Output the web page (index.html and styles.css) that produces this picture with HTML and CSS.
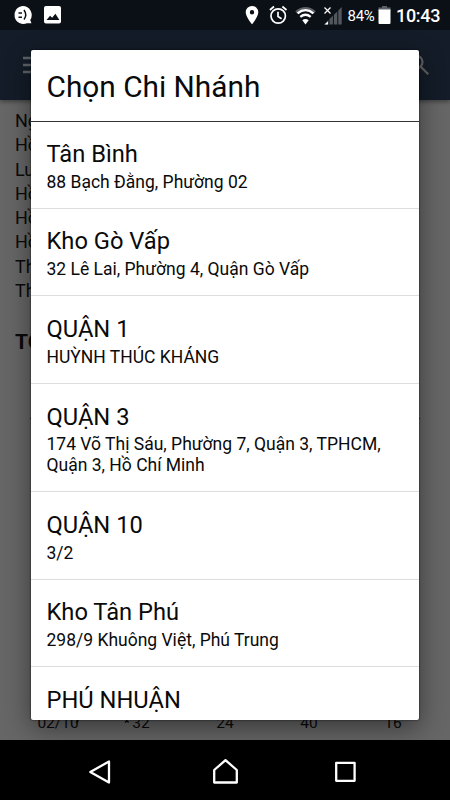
FILE: index.html
```html
<!DOCTYPE html>
<html lang="vi">
<head>
<meta charset="utf-8">
<title>Chọn Chi Nhánh</title>
<link rel="stylesheet" href="styles.css">
</head>
<body>
<div class="screen">
  <header class="status">
    <svg class="status-left" width="80" height="30" viewBox="0 0 80 30">
      <path fill="#fff" d="M22.500 6a9 9 0 1 0 4.500 17.200h4.500l-1.300-3.200A9 9 0 0 0 22.500 6z"/>
      <path d="M18.500 13h3.500M18.500 17.200h3.500M24 10q3.500 5 0 9.500" fill="none" stroke="#0b1017" stroke-width="1.500"/>
      <rect x="44" y="6" width="17" height="17.500" rx="2" fill="#fff"/>
      <path d="M46.500 20l3.600-4.200 2 2 3.300-4 4 6.200z" fill="#0b1017"/>
    </svg>
    <svg class="status-icons" width="102" height="30" viewBox="240 0 102 30">
      <path fill="#fff" fill-rule="evenodd" d="M252 6a6.300 6.300 0 0 0-6.300 6.300c0 4.700 6.300 12 6.300 12s6.300-7.300 6.300-12A6.300 6.300 0 0 0 252 6zm0 4.100a2.200 2.200 0 1 1 0 4.400 2.200 2.200 0 0 1 0-4.400z"/>
      <g fill="none" stroke="#fff" stroke-width="1.700"><circle cx="278.200" cy="16" r="7.200"/><path d="M278 11.700v4.800l3.600 2.200M269.900 10l4.100-3.500M286.500 10l-4.100-3.500"/></g>
      <path fill="#5b6066" d="M295.300 11.200Q305.500 2.800 315.700 11.200L314 13.500Q305.500 7 297 13.500z"/>
      <g fill="none" stroke="#fff" stroke-width="2.300"><path d="M297.600 13.300q7.900-6.300 15.800 0M300.300 16.800q5.200-4.200 10.400 0"/></g>
      <path fill="#fff" d="M302.300 20.300q3.200-2.500 6.400 0L305.500 24.500z"/>
      <path fill="#53585e" d="M341.700 7v17.500h-3.400V10.400zM337.300 11.400v13.100h-3.400V14.700zM332.900 15.700v8.800h-3.400V19zM328.500 20v4.500H324z"/>
      <path fill="#fff" d="M328 21.500v3h-3.500z"/>
      <path d="M324.500 7.500l6 6M330.500 7.500l-6 6" stroke="#fff" stroke-width="1.200"/>
    </svg>
    <span class="percent">84%</span>
    <svg class="battery" width="13" height="18" viewBox="0 0 13 18"><path fill="#5b6066" d="M4 0h5v1.500h3.500V5H.5V1.500H4z"/><path fill="#fff" d="M.5 3.500h12V17a1 1 0 0 1-1 1h-10a1 1 0 0 1-1-1z"/></svg>
    <span class="clock">10:43</span>
  </header>

  <div class="toolbar">
    <svg width="24" height="18" viewBox="0 0 24 18"><path d="M0 2h20M0 9h20M0 16h20" stroke="#606469" stroke-width="2.400"/></svg>
    <svg width="22" height="22" viewBox="0 0 22 22" fill="none" stroke="#606060" stroke-width="2.200"><circle cx="8" cy="8" r="6.500"/><path d="M12.600 12.600l7.700 7.700"/></svg>
  </div>

  <main class="page">
    <div class="lines">
      <p>Ng</p><p>Hồ</p><p>Lư</p><p>Hồ</p><p>Hồ</p><p>Hồ</p><p>Th</p><p>Th</p>
    </div>
    <h2 class="total">TỔ</h2>
    <div class="chart">
      <div class="axis">
        <span>02/10</span><span>32</span><span>24</span><span>40</span><span>16</span>
        <svg class="marks" width="60" height="4" viewBox="0 0 60 4" fill="none" stroke="#0a0a0a" stroke-width="1.300"><path d="M2 3l2.500-3M51 2.500l1.800-1.800 1.800 1.800"/></svg>
      </div>
    </div>
  </main>

  <nav class="nav">
    <svg width="450" height="60" viewBox="0 0 450 60" fill="none" stroke="#fff" stroke-width="2.300" stroke-linejoin="round">
      <path d="M109 21.500v21L90.300 32z"/>
      <path d="M214.200 42.500V30L225.500 20.200 236.800 30v12.500z"/>
      <rect x="336.200" y="22.800" width="18.400" height="18"/>
    </svg>
  </nav>

  <section class="dialog">
    <h1 class="dialog-title">Chọn Chi Nhánh</h1>
    <ul class="branches">
      <li><h3>Tân Bình</h3><p>88 Bạch Đằng, Phường 02</p></li>
      <li><h3>Kho Gò Vấp</h3><p>32 Lê Lai, Phường 4, Quận Gò Vấp</p></li>
      <li><h3>QUẬN 1</h3><p>HUỲNH THÚC KHÁNG</p></li>
      <li><h3>QUẬN 3</h3><p>174 Võ Thị Sáu, Phường 7, Quận 3, TPHCM, Quận 3, Hồ Chí Minh</p></li>
      <li><h3>QUẬN 10</h3><p>3/2</p></li>
      <li><h3>Kho Tân Phú</h3><p>298/9 Khuông Việt, Phú Trung</p></li>
      <li><h3>PHÚ NHUẬN</h3></li>
    </ul>
  </section>
</div>
</body>
</html>
```
FILE: styles.css
```css
* { box-sizing: border-box; margin: 0; padding: 0; }
body { font-family: Roboto, "Noto Sans", sans-serif; color: #0a0a0a; background: #000; }
svg { display: block; flex: none; }
.screen { position: relative; width: 450px; height: 800px; overflow: hidden; display: flex; flex-direction: column; }

.status { height: 30px; flex: none; display: flex; align-items: center; background: #0b1017; color: #fff; position: relative; z-index: 3; }
.status-icons { margin-left: 160px; }
.percent { width: 31px; margin-left: 5.500px; padding-top: 1px; font-size: 15px; letter-spacing: -0.250px; white-space: nowrap; }
.battery { margin-left: -0.500px; }
.clock { margin-left: 5px; padding-top: 1px; font-size: 18px; font-weight: 500; line-height: 30px; letter-spacing: -0.300px; }

.toolbar { height: 70px; flex: none; display: flex; justify-content: space-between; align-items: center; padding: 0 20px 0 23px; background: #131c28; box-shadow: 0 2px 4px rgba(0, 0, 0, .35); position: relative; }

.page { height: 640px; flex: none; padding: 9px 0 0 15px; background: #666; display: flex; flex-direction: column; }
.lines p { font-size: 18px; line-height: 24.300px; }
.total { margin-top: 25px; font-size: 21px; line-height: 28px; }
.chart { flex: 1; display: flex; align-items: flex-end; margin: 62px 30px 8px 15px; border-top: 1px solid #222; }
.axis { position: relative; display: flex; font-size: 15.500px; line-height: 18px; }
.axis span { width: 84px; text-align: center; flex: none; }
.axis span:first-child { width: 56px; margin-right: 13px; }
.marks { position: absolute; left: 44px; top: 5.500px; }

.nav { height: 60px; flex: none; background: #000; position: relative; z-index: 3; }

.dialog { position: absolute; left: 31px; top: 50px; width: 388px; height: 670px; overflow: hidden; z-index: 2; background: #fff; border-radius: 2px; box-shadow: 0 0 2px rgba(0, 0, 0, .8), 0 8px 26px rgba(0, 0, 0, .45); }
.dialog-title { height: 72px; padding: 1px 15.500px 0; line-height: 72px; font-size: 29.800px; font-weight: 400; border-bottom: 1px solid #333; }
.branches { list-style: none; margin-top: -0.700px; }
.branches li { padding: 18.600px 15.500px 15.500px; border-bottom: 1px solid #ddd; }
.branches h3 { font-size: 23.700px; line-height: 28px; font-weight: 400; margin-bottom: 3.750px; }
.branches p { font-size: 17.500px; line-height: 20.700px; }
```
